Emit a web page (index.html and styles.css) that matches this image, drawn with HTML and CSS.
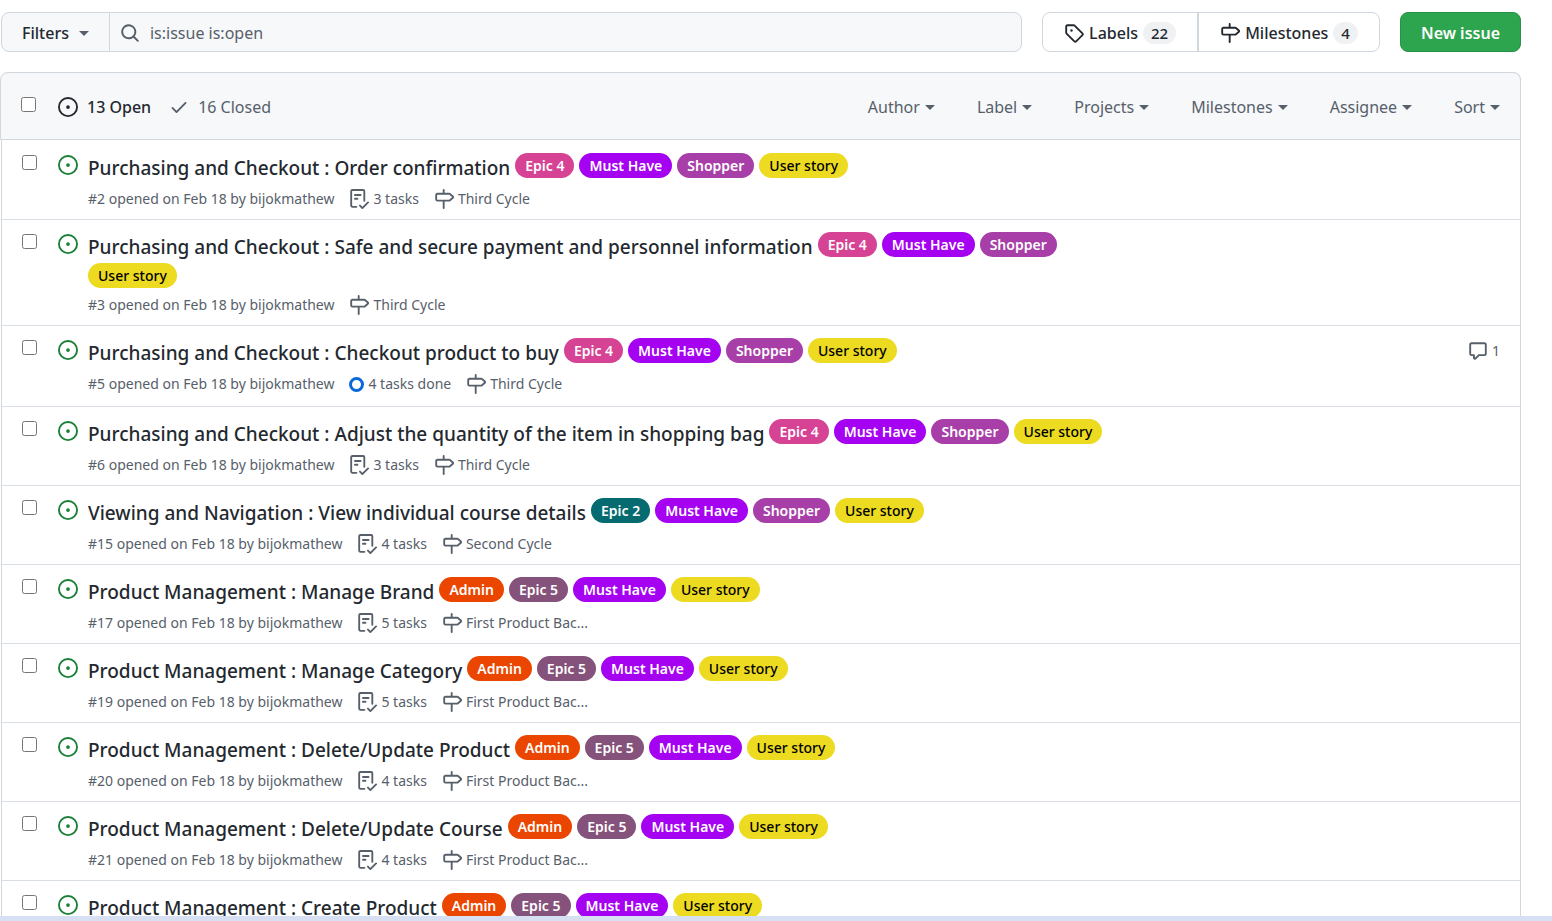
FILE: index.html
```
<!DOCTYPE html>
<html lang="en">
<head>
<meta charset="utf-8">
<meta name="viewport" content="width=device-width, initial-scale=1">
<title>Issues</title>
<link rel="stylesheet" href="styles.css">
</head>
<body>
<svg class="sprite" aria-hidden="true">
  <symbol id="issue" viewBox="0 0 16 16"><path fill-rule="evenodd" d="M8 9.5a1.5 1.5 0 100-3 1.5 1.5 0 000 3zM8 0a8 8 0 100 16A8 8 0 008 0zM1.5 8a6.5 6.5 0 1113 0 6.5 6.5 0 01-13 0z"/></symbol>
  <symbol id="milestone" viewBox="0 0 16 16"><path fill-rule="evenodd" d="M7.75 0a.75.75 0 01.75.75V3h3.634c.414 0 .814.147 1.13.414l2.07 1.75a1.75 1.75 0 010 2.672l-2.07 1.75a1.75 1.75 0 01-1.13.414H8.5v5.25a.75.75 0 11-1.5 0V10H2.75A1.75 1.75 0 011 8.25v-3.5C1 3.784 1.784 3 2.75 3H7V.75A.75.75 0 017.75 0zm0 8.5h4.384a.25.25 0 00.161-.06l2.07-1.75a.25.25 0 000-.38l-2.07-1.75a.25.25 0 00-.161-.06H2.75a.25.25 0 00-.25.25v3.5c0 .138.112.25.25.25h5z"/></symbol>
  <symbol id="tag" viewBox="0 0 16 16"><path fill-rule="evenodd" d="M2.5 7.775V2.75a.25.25 0 01.25-.25h5.025a.25.25 0 01.177.073l6.25 6.25a.25.25 0 010 .354l-5.025 5.025a.25.25 0 01-.354 0l-6.25-6.25a.25.25 0 01-.073-.177zm-1.5 0V2.75C1 1.784 1.784 1 2.75 1h5.025c.464 0 .91.184 1.238.513l6.25 6.25a1.75 1.75 0 010 2.474l-5.026 5.026a1.75 1.75 0 01-2.474 0l-6.25-6.25A1.75 1.75 0 011 7.775zM6 5a1 1 0 100 2 1 1 0 000-2z"/></symbol>
  <symbol id="search" viewBox="0 0 16 16"><path fill-rule="evenodd" d="M11.5 7a4.499 4.499 0 11-8.998 0A4.499 4.499 0 0111.5 7zm-.82 4.74a6 6 0 111.06-1.06l3.04 3.04a.75.75 0 11-1.06 1.06l-3.04-3.04z"/></symbol>
  <symbol id="check" viewBox="0 0 16 16"><path fill-rule="evenodd" d="M13.78 4.22a.75.75 0 010 1.06l-7.25 7.25a.75.75 0 01-1.06 0L2.22 9.28a.75.75 0 011.06-1.06L6 10.94l6.72-6.72a.75.75 0 011.06 0z"/></symbol>
  <symbol id="comment" viewBox="0 0 16 16"><path fill-rule="evenodd" d="M2.75 2.5a.25.25 0 00-.25.25v7.5c0 .138.112.25.25.25h2a.75.75 0 01.75.75v2.19l2.72-2.72a.75.75 0 01.53-.22h4.5a.25.25 0 00.25-.25v-7.5a.25.25 0 00-.25-.25H2.75zM1 2.75C1 1.784 1.784 1 2.75 1h10.5c.966 0 1.75.784 1.75 1.75v7.5A1.75 1.75 0 0113.25 12H9.06l-2.573 2.573A1.457 1.457 0 014 13.543V12H2.75A1.75 1.75 0 011 10.25v-7.5z"/></symbol>
  <symbol id="tasks" viewBox="0 0 16 16"><path fill-rule="evenodd" d="M2.5 1.75a.25.25 0 01.25-.25h8.5a.25.25 0 01.25.25v7.736a.75.75 0 101.5 0V1.75A1.75 1.75 0 0011.25 0h-8.5A1.75 1.75 0 001 1.75v11.5c0 .966.784 1.75 1.75 1.75h3.17a.75.75 0 000-1.5H2.75a.25.25 0 01-.25-.25V1.75zM4.75 4a.75.75 0 000 1.5h4.5a.75.75 0 000-1.5h-4.5zM4 7.75A.75.75 0 014.75 7h2a.75.75 0 010 1.5h-2A.75.75 0 014 7.75zm11.774 3.537a.75.75 0 00-1.048-1.074L10.7 14.145 9.281 12.72a.75.75 0 00-1.062 1.058l1.943 1.95a.75.75 0 001.055.008l4.557-4.45z"/></symbol>
</svg>

<div class="page">
  <main class="content">
    <div class="toolbar">
      <form class="search">
        <button class="filters" type="button">Filters <span class="caret"></span></button>
        <label class="field">
          <svg class="icon"><use href="#search"/></svg>
          <input type="text" aria-label="Search all issues" value="is:issue is:open">
        </label>
      </form>
      <nav class="subnav">
        <a href="#labels"><svg class="icon"><use href="#tag"/></svg>Labels <span class="counter">22</span></a>
        <a href="#milestones"><svg class="icon"><use href="#milestone"/></svg>Milestones <span class="counter">4</span></a>
      </nav>
      <button class="primary" type="button">New issue</button>
    </div>

    <section class="box">
      <header class="box-header">
        <input class="select" type="checkbox" aria-label="Select all issues">
        <nav class="states">
          <a class="current" href="#open"><svg class="icon"><use href="#issue"/></svg>13 Open</a>
          <a href="#closed"><svg class="icon"><use href="#check"/></svg>16 Closed</a>
        </nav>
        <div class="menus">
          <button type="button">Author<span class="caret"></span></button>
          <button type="button">Label<span class="caret"></span></button>
          <button type="button">Projects<span class="caret"></span></button>
          <button type="button">Milestones<span class="caret"></span></button>
          <button type="button">Assignee<span class="caret"></span></button>
          <button type="button">Sort<span class="caret"></span></button>
        </div>
      </header>

      <ul class="issues">
        <li class="issue">
          <input class="select" type="checkbox" aria-label="Select issue 2">
          <svg class="icon open"><use href="#issue"/></svg>
          <div class="body">
            <div class="heading"><a class="title" href="#2">Purchasing and Checkout : Order confirmation</a><a class="label pink" href="#l">Epic 4</a><a class="label violet" href="#l">Must Have</a><a class="label purple" href="#l">Shopper</a><a class="label yellow" href="#l">User story</a></div>
            <div class="meta"><span>#2 opened on Feb 18 by bijokmathew</span><span class="item"><svg class="icon"><use href="#tasks"/></svg>3 tasks</span><a class="item" href="#m"><svg class="icon"><use href="#milestone"/></svg>Third Cycle</a></div>
          </div>
          <div class="aside"></div>
        </li>
        <li class="issue">
          <input class="select" type="checkbox" aria-label="Select issue 3">
          <svg class="icon open"><use href="#issue"/></svg>
          <div class="body">
            <div class="heading"><a class="title" href="#3">Purchasing and Checkout : Safe and secure payment and personnel information</a><a class="label pink" href="#l">Epic 4</a><a class="label violet" href="#l">Must Have</a><a class="label purple" href="#l">Shopper</a><a class="label yellow" href="#l">User story</a></div>
            <div class="meta"><span>#3 opened on Feb 18 by bijokmathew</span><a class="item" href="#m"><svg class="icon"><use href="#milestone"/></svg>Third Cycle</a></div>
          </div>
          <div class="aside"></div>
        </li>
        <li class="issue">
          <input class="select" type="checkbox" aria-label="Select issue 5">
          <svg class="icon open"><use href="#issue"/></svg>
          <div class="body">
            <div class="heading"><a class="title" href="#5">Purchasing and Checkout : Checkout product to buy</a><a class="label pink" href="#l">Epic 4</a><a class="label violet" href="#l">Must Have</a><a class="label purple" href="#l">Shopper</a><a class="label yellow" href="#l">User story</a></div>
            <div class="meta tall"><span>#5 opened on Feb 18 by bijokmathew</span><span class="item"><span class="ring"></span>4 tasks done</span><a class="item" href="#m"><svg class="icon"><use href="#milestone"/></svg>Third Cycle</a></div>
          </div>
          <div class="aside"><a class="comments" href="#5" aria-label="1 comment"><svg class="icon"><use href="#comment"/></svg>1</a></div>
        </li>
        <li class="issue">
          <input class="select" type="checkbox" aria-label="Select issue 6">
          <svg class="icon open"><use href="#issue"/></svg>
          <div class="body">
            <div class="heading"><a class="title" href="#6">Purchasing and Checkout : Adjust the quantity of the item in shopping bag</a><a class="label pink" href="#l">Epic 4</a><a class="label violet" href="#l">Must Have</a><a class="label purple" href="#l">Shopper</a><a class="label yellow" href="#l">User story</a></div>
            <div class="meta"><span>#6 opened on Feb 18 by bijokmathew</span><span class="item"><svg class="icon"><use href="#tasks"/></svg>3 tasks</span><a class="item" href="#m"><svg class="icon"><use href="#milestone"/></svg>Third Cycle</a></div>
          </div>
          <div class="aside"></div>
        </li>
        <li class="issue">
          <input class="select" type="checkbox" aria-label="Select issue 15">
          <svg class="icon open"><use href="#issue"/></svg>
          <div class="body">
            <div class="heading"><a class="title" href="#15">Viewing and Navigation : View individual course details</a><a class="label teal" href="#l">Epic 2</a><a class="label violet" href="#l">Must Have</a><a class="label purple" href="#l">Shopper</a><a class="label yellow" href="#l">User story</a></div>
            <div class="meta"><span>#15 opened on Feb 18 by bijokmathew</span><span class="item"><svg class="icon"><use href="#tasks"/></svg>4 tasks</span><a class="item" href="#m"><svg class="icon"><use href="#milestone"/></svg>Second Cycle</a></div>
          </div>
          <div class="aside"></div>
        </li>
        <li class="issue">
          <input class="select" type="checkbox" aria-label="Select issue 17">
          <svg class="icon open"><use href="#issue"/></svg>
          <div class="body">
            <div class="heading"><a class="title" href="#17">Product Management : Manage Brand</a><a class="label orange" href="#l">Admin</a><a class="label plum" href="#l">Epic 5</a><a class="label violet" href="#l">Must Have</a><a class="label yellow" href="#l">User story</a></div>
            <div class="meta"><span>#17 opened on Feb 18 by bijokmathew</span><span class="item"><svg class="icon"><use href="#tasks"/></svg>5 tasks</span><a class="item" href="#m"><svg class="icon"><use href="#milestone"/></svg>First Product Bac...</a></div>
          </div>
          <div class="aside"></div>
        </li>
        <li class="issue">
          <input class="select" type="checkbox" aria-label="Select issue 19">
          <svg class="icon open"><use href="#issue"/></svg>
          <div class="body">
            <div class="heading"><a class="title" href="#19">Product Management : Manage Category</a><a class="label orange" href="#l">Admin</a><a class="label plum" href="#l">Epic 5</a><a class="label violet" href="#l">Must Have</a><a class="label yellow" href="#l">User story</a></div>
            <div class="meta"><span>#19 opened on Feb 18 by bijokmathew</span><span class="item"><svg class="icon"><use href="#tasks"/></svg>5 tasks</span><a class="item" href="#m"><svg class="icon"><use href="#milestone"/></svg>First Product Bac...</a></div>
          </div>
          <div class="aside"></div>
        </li>
        <li class="issue">
          <input class="select" type="checkbox" aria-label="Select issue 20">
          <svg class="icon open"><use href="#issue"/></svg>
          <div class="body">
            <div class="heading"><a class="title" href="#20">Product Management : Delete/Update Product</a><a class="label orange" href="#l">Admin</a><a class="label plum" href="#l">Epic 5</a><a class="label violet" href="#l">Must Have</a><a class="label yellow" href="#l">User story</a></div>
            <div class="meta"><span>#20 opened on Feb 18 by bijokmathew</span><span class="item"><svg class="icon"><use href="#tasks"/></svg>4 tasks</span><a class="item" href="#m"><svg class="icon"><use href="#milestone"/></svg>First Product Bac...</a></div>
          </div>
          <div class="aside"></div>
        </li>
        <li class="issue">
          <input class="select" type="checkbox" aria-label="Select issue 21">
          <svg class="icon open"><use href="#issue"/></svg>
          <div class="body">
            <div class="heading"><a class="title" href="#21">Product Management : Delete/Update Course</a><a class="label orange" href="#l">Admin</a><a class="label plum" href="#l">Epic 5</a><a class="label violet" href="#l">Must Have</a><a class="label yellow" href="#l">User story</a></div>
            <div class="meta"><span>#21 opened on Feb 18 by bijokmathew</span><span class="item"><svg class="icon"><use href="#tasks"/></svg>4 tasks</span><a class="item" href="#m"><svg class="icon"><use href="#milestone"/></svg>First Product Bac...</a></div>
          </div>
          <div class="aside"></div>
        </li>
        <li class="issue">
          <input class="select" type="checkbox" aria-label="Select issue">
          <svg class="icon open"><use href="#issue"/></svg>
          <div class="body">
            <div class="heading"><a class="title" href="#next">Product Management : Create Product</a><a class="label orange" href="#l">Admin</a><a class="label plum" href="#l">Epic 5</a><a class="label violet" href="#l">Must Have</a><a class="label yellow" href="#l">User story</a></div>
          </div>
          <div class="aside"></div>
        </li>
      </ul>
    </section>
  </main>
  <div class="bottom-bar"></div>
</div>
</body>
</html>
```
FILE: styles.css
```
* { box-sizing: border-box; }

body {
  margin: 0;
  background: #fff;
  color: #24292f;
  font: 16px/24px "Noto Sans", "Open Sans", sans-serif;
}

a { color: inherit; text-decoration: none; }

button, input { font: inherit; color: inherit; }

button { cursor: pointer; }

.sprite { display: none; }

.icon {
  flex: none;
  width: 20px;
  height: 20px;
  fill: currentColor;
}

.caret {
  display: inline-block;
  border: 5px solid transparent;
  border-top-color: currentColor;
  border-bottom: 0;
}

.page {
  display: flex;
  flex-direction: column;
  height: 100vh;
}

.content {
  flex: 1;
  min-height: 0;
  overflow: hidden;
  padding: 12px 31px 0 0;
}

.bottom-bar {
  flex: none;
  height: 5px;
  background: #d7e0f3;
}

/* Toolbar */
.toolbar {
  display: flex;
  gap: 20px;
  height: 40px;
  margin: 0 0 20px 1px;
}

.search {
  display: flex;
  flex: 1;
  min-width: 0;
  border: 1px solid #d0d7de;
  border-radius: 8px;
  background: #f6f8fa;
}

.filters {
  display: flex;
  align-items: center;
  gap: 10px;
  padding: 2px 20px 0;
  border: 0;
  border-right: 1px solid #d0d7de;
  background: none;
  font-weight: 500;
}

.filters .caret { color: #57606a; }

.field {
  display: flex;
  flex: 1;
  align-items: center;
  gap: 10px;
  min-width: 0;
  padding: 2px 10px 0;
  color: #57606a;
}

.field input {
  flex: 1;
  min-width: 0;
  padding: 0;
  border: 0;
  outline: 0;
  background: none;
}

.subnav {
  display: flex;
  border: 1px solid #d0d7de;
  border-radius: 8px;
  font-weight: 500;
}

.subnav a {
  display: flex;
  align-items: center;
  gap: 5px;
  padding: 2px 21px 0;
}

.subnav a + a { border-left: 2px solid #d0d7de; }

.counter {
  min-width: 24px;
  padding: 0 8px;
  border-radius: 12px;
  background: #eff1f3;
  font-size: 15px;
  line-height: 22px;
  text-align: center;
}

.primary {
  padding: 2px 20px 0;
  border: 1px solid #2a9147;
  border-radius: 8px;
  background: #2da44e;
  color: #fff;
  font-weight: 600;
}

/* Issue list */
.box {
  margin-left: 1px;
  border-right: 1px solid #d0d7de;
  border-left: 1px solid #d0d7de;
  border-radius: 8px 8px 0 0;
}

.box-header {
  display: flex;
  align-items: center;
  margin: 0 -1px 0 -2px;
  height: 68px;
  padding: 2px 20px 0 0;
  border: 1px solid #d0d7de;
  border-radius: 8px 8px 0 0;
  background: #f6f8fa;
  color: #57606a;
}

.select {
  flex: none;
  width: 15px;
  height: 15px;
  margin: 0 0 0 20px;
}

.box-header .select { margin-bottom: 5px; }

.states {
  display: flex;
  gap: 18px;
  margin-left: 22px;
}

.states a {
  display: flex;
  align-items: center;
  gap: 9px;
}

.states .current {
  color: #24292f;
  font-weight: 500;
}

.menus {
  display: flex;
  gap: 42px;
  margin-left: auto;
}

.menus button {
  display: flex;
  align-items: center;
  gap: 5px;
  padding: 0;
  border: 0;
  background: none;
}

.issues {
  margin: 0;
  padding: 1px 0 0;
  list-style: none;
}

.issue {
  display: flex;
  align-items: flex-start;
  padding: 12px 20px 8px 0;
  border-bottom: 1px solid #d8dee4;
}

.issue .select { margin-top: 2px; }

.open {
  margin: 2px 10px 0 21px;
  color: #1a7f37;
}

.body {
  flex: 1;
  min-width: 0;
}

.aside {
  display: flex;
  justify-content: flex-end;
  width: 25%;
}

.heading {
  display: flex;
  flex-wrap: wrap;
  align-items: flex-start;
  column-gap: 5px;
}

.title {
  font-size: 19px;
  font-weight: 500;
  line-height: 31px;
}

.label {
  margin-bottom: 2px;
  padding: 0 10px;
  border-radius: 13px;
  color: #fff;
  font-size: 14px;
  font-weight: 600;
  line-height: 25px;
  white-space: nowrap;
}

.pink { background: #d64394; }
.violet { background: #a602f2; }
.purple { background: #a83fa8; }
.teal { background: #056b70; }
.orange { background: #eb4600; }
.plum { background: #84527a; }
.yellow { background: #ecdb20; color: #000; font-weight: 500; }

.meta {
  display: flex;
  align-items: flex-start;
  gap: 15px;
  margin-top: 3px;
  color: #57606a;
  font-size: 14px;
}

.tall { padding-bottom: 2px; }

.item {
  display: flex;
  align-items: center;
  gap: 4px;
}

.ring {
  width: 15px;
  height: 15px;
  border: 3px solid #0969da;
  border-radius: 50%;
}

.comments {
  display: flex;
  align-items: center;
  gap: 4px;
  margin-top: 1px;
  color: #57606a;
  font-size: 14px;
}
```
